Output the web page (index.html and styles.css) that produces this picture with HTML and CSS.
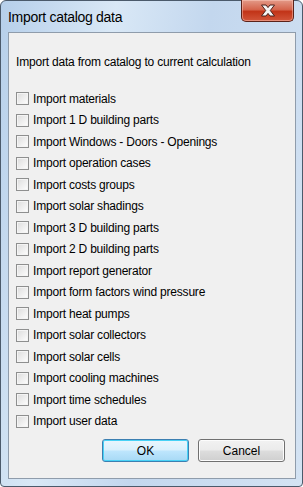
FILE: index.html
```html
<!DOCTYPE html>
<html lang="en">
<head>
    <meta charset="UTF-8">
    <title>Import catalog data</title>
    <link rel="stylesheet" href="styles.css">
</head>
<body>
    <div class="window">
        <div class="titlebar">
            <span class="title">Import catalog data</span>
            <button class="close-btn">
                <svg width="20" height="13" viewBox="0 0 20 13">
                    <path d="M3.5 1 L8 1 L10 3.6 L12 1 L16.5 1 L12.3 6.5 L16.5 12 L12 12 L10 9.4 L8 12 L3.5 12 L7.7 6.5 Z" fill="#f4f4f4" stroke="#4a1f18" stroke-width="1" stroke-linejoin="round"/>
                </svg>
            </button>
        </div>
        <div class="client">
            <p class="intro">Import data from catalog to current calculation</p>
            <ul class="options">
                <li><span class="check"></span>Import materials</li>
                <li><span class="check"></span>Import 1 D building parts</li>
                <li><span class="check"></span>Import Windows - Doors - Openings</li>
                <li><span class="check"></span>Import operation cases</li>
                <li><span class="check"></span>Import costs groups</li>
                <li><span class="check"></span>Import solar shadings</li>
                <li><span class="check"></span>Import 3 D building parts</li>
                <li><span class="check"></span>Import 2 D building parts</li>
                <li><span class="check"></span>Import report generator</li>
                <li><span class="check"></span>Import form factors wind pressure</li>
                <li><span class="check"></span>Import heat pumps</li>
                <li><span class="check"></span>Import solar collectors</li>
                <li><span class="check"></span>Import solar cells</li>
                <li><span class="check"></span>Import cooling machines</li>
                <li><span class="check"></span>Import time schedules</li>
                <li><span class="check"></span>Import user data</li>
            </ul>
            <div class="buttons">
                <button class="btn btn-default">OK</button>
                <button class="btn">Cancel</button>
            </div>
        </div>
    </div>
</body>
</html>
```

FILE: styles.css
```css
body {
    margin: 0;
    font-family: "Liberation Sans", Arial, sans-serif;
    background-color: #fff;
}
.window {
    box-sizing: border-box;
    width: 303px;
    height: 487px;
    padding: 0 6px 7px 7px;
    border: 1px solid #4b5a6b;
    border-radius: 6px 6px 4px 4px;
    background: linear-gradient(100deg, #b6cfea 0%, #d9e8f6 30%, #c3d7ee 55%, #d4e3f3 100%);
    display: flex;
    flex-direction: column;
}
.titlebar {
    height: 31px;
    display: flex;
    justify-content: space-between;
    align-items: flex-start;
}
.title {
    margin-top: 8px;
    font-size: 14px;
    letter-spacing: -0.3px;
    color: #000;
}
.close-btn {
    width: 53px;
    height: 22px;
    margin-top: -1px;
    margin-right: 2px;
    padding: 0;
    border: 1px solid #5b2219;
    border-top: none;
    border-radius: 0 0 5px 5px;
    background: linear-gradient(#e39a88 0%, #d5654d 45%, #c23418 55%, #d2553a 100%);
    display: flex;
    align-items: center;
    justify-content: center;
    box-shadow: inset 0 0 0 1px rgba(255, 210, 200, 0.45);
}
.client {
    flex: 1;
    border: 1px solid #8f9cab;
    background-color: #f0f0f0;
    padding: 22px 0 0 7px;
    font-size: 12px;
    letter-spacing: -0.2px;
    color: #000;
}
.intro {
    margin: 0;
    line-height: 14px;
}
.options {
    list-style: none;
    margin: 19px 0 0 0;
    padding: 0;
}
.options li {
    height: 21.5px;
    display: flex;
    align-items: center;
}
.check {
    box-sizing: border-box;
    width: 13px;
    height: 13px;
    margin-right: 4px;
    border: 1px solid #8e8f8f;
    background: linear-gradient(135deg, #dcdcdc 0%, #f4f4f4 70%, #fff 100%);
    box-shadow: inset 0 0 0 1px #f4f4f4;
}
.buttons {
    display: flex;
    justify-content: flex-end;
    gap: 9px;
    margin-top: 7px;
    padding-right: 10px;
}
.btn {
    width: 87px;
    height: 23px;
    font-family: "Liberation Sans", Arial, sans-serif;
    font-size: 12px;
    color: #000;
    border: 1px solid #707070;
    border-radius: 3px;
    background: linear-gradient(#f2f2f2 0%, #ebebeb 48%, #dddddd 52%, #cfcfcf 100%);
    box-shadow: inset 0 0 0 1px #fcfcfc;
}
.btn-default {
    border-color: #3c7fb1;
    background: linear-gradient(#eaf6fd 0%, #d9f0fc 48%, #bee6fd 52%, #a7d9f5 100%);
    box-shadow: inset 0 0 0 1px #48d2f6;
}
```
